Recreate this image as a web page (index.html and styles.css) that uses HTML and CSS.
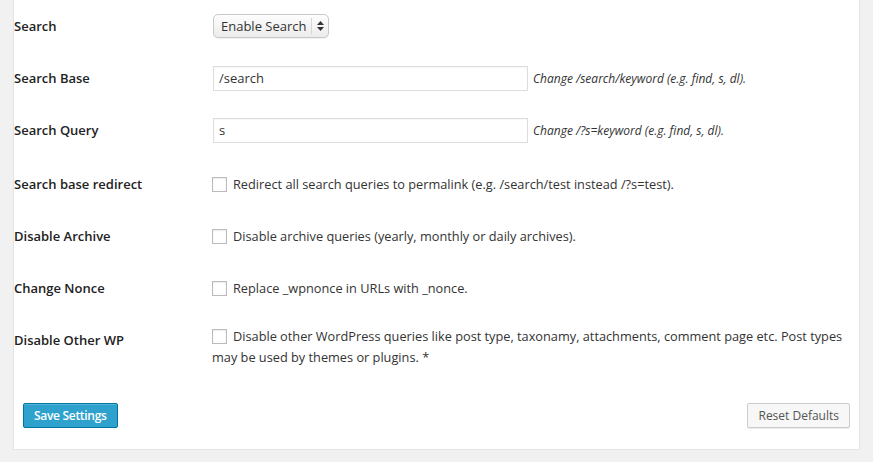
FILE: index.html
```
<!DOCTYPE html>
<html lang="en">
<head>
    <meta charset="UTF-8">
    <title>Search Settings</title>
    <link rel="stylesheet" href="styles.css">
</head>
<body>

    <div class="panel">
        <form id="search-settings">

            <div class="row">
                <label class="row-label" for="search">Search</label>
                <div class="row-field">
                    <div class="select">
                        <span>Enable Search</span>
                        <span class="select-arrows">
                            <svg width="7" height="10" viewBox="0 0 7 10"><path d="M3.5 0 L7 4 H0 Z M3.5 10 L7 6 H0 Z" fill="#333"/></svg>
                        </span>
                    </div>
                </div>
            </div>

            <div class="row">
                <label class="row-label" for="search-base">Search Base</label>
                <div class="row-field">
                    <input type="text" id="search-base" class="text-input" value="/search">
                    <span class="description">Change /search/keyword (e.g. find, s, dl).</span>
                </div>
            </div>

            <div class="row">
                <label class="row-label" for="search-query">Search Query</label>
                <div class="row-field">
                    <input type="text" id="search-query" class="text-input" value="s">
                    <span class="description">Change /?s=keyword (e.g. find, s, dl).</span>
                </div>
            </div>

            <div class="row row-check">
                <span class="row-label">Search base redirect</span>
                <label class="row-field check">
                    <span class="checkbox"></span>Redirect all search queries to permalink (e.g. /search/test instead /?s=test).
                </label>
            </div>

            <div class="row row-check">
                <span class="row-label">Disable Archive</span>
                <label class="row-field check">
                    <span class="checkbox"></span>Disable archive queries (yearly, monthly or daily archives).
                </label>
            </div>

            <div class="row row-check">
                <span class="row-label">Change Nonce</span>
                <label class="row-field check">
                    <span class="checkbox"></span>Replace _wpnonce in URLs with _nonce.
                </label>
            </div>

            <div class="row row-tall">
                <span class="row-label">Disable Other WP</span>
                <label class="row-field check-block">
                    <span class="checkbox"></span>Disable other WordPress queries like post type, taxonamy, attachments, comment page etc. Post types may be used by themes or plugins. *
                </label>
            </div>

            <div class="actions">
                <button type="submit" class="btn btn-primary">Save Settings</button>
                <button type="button" class="btn">Reset Defaults</button>
            </div>

        </form>
    </div>

</body>
</html>
```

FILE: styles.css
```
* {
    margin: 0;
    padding: 0;
    box-sizing: border-box;
}

body {
    font-family: 'Open Sans', sans-serif;
    font-size: 13px;
    color: #444;
    background-color: #f1f1f1;
}

/* White settings box */
.panel {
    width: 847px;
    margin-left: 13px;
    background-color: #fff;
    border: 1px solid #e5e5e5;
    border-top: none;
    box-shadow: 0 1px 1px rgba(0, 0, 0, 0.04);
}

.row {
    display: flex;
    align-items: center;
    height: 52px;
}

.row-check {
    padding-top: 4px;
}

.row-label {
    width: 198px;
    flex-shrink: 0;
    font-weight: 600;
    color: #222;
}

.row-field {
    display: flex;
    align-items: center;
}

/* Select box */
.select {
    display: flex;
    align-items: center;
    width: 116px;
    height: 24px;
    margin-left: 1px;
    border: 1px solid #c8c8c8;
    border-radius: 5px;
    background: linear-gradient(#fdfdfd, #ececec);
    box-shadow: 0 1px 1px rgba(0, 0, 0, 0.06);
    color: #333;
    padding-left: 7px;
}

.select span:first-child {
    flex: 1;
}

.select-arrows {
    display: flex;
    align-items: center;
    justify-content: center;
    width: 17px;
    height: 16px;
    border-left: 1px solid #d6d6d6;
}

.text-input {
    width: 315px;
    height: 25px;
    margin-left: 1px;
    border: 1px solid #ddd;
    padding: 0 5px;
    font-family: 'Open Sans', sans-serif;
    font-size: 13px;
    color: #333;
    outline: none;
    box-shadow: inset 0 1px 2px rgba(0, 0, 0, 0.04);
}

.description {
    margin-left: 5px;
    font-size: 12px;
    font-style: italic;
    color: #333;
}

/* Checkbox rows */
.checkbox {
    display: inline-block;
    width: 15px;
    height: 15px;
    border: 1px solid #bbb;
    background-color: #fff;
    box-shadow: inset 0 1px 2px rgba(0, 0, 0, 0.08);
    margin-right: 6px;
    vertical-align: -3px;
}

.check {
    color: #333;
    font-size: 12.75px;
}

.row-tall {
    height: auto;
    align-items: flex-start;
    padding-top: 14px;
}

.row-tall .row-label {
    padding-top: 5px;
}

.check-block {
    display: block;
    color: #333;
    font-size: 12.75px;
    line-height: 21px;
    width: 640px;
}

/* Buttons */
.actions {
    display: flex;
    justify-content: space-between;
    padding: 35px 9px 21px 9px;
}

.btn {
    height: 25px;
    padding: 0 10px;
    font-family: 'Open Sans', sans-serif;
    font-size: 12px;
    color: #555;
    background-color: #f7f7f7;
    border: 1px solid #ccc;
    border-radius: 2px;
    box-shadow: 0 1px 0 rgba(0, 0, 0, 0.08);
    cursor: pointer;
}

.btn-primary {
    background-color: #2ea2cc;
    border-color: #0074a2;
    color: #fff;
    font-weight: 600;
    letter-spacing: -0.3px;
    box-shadow: inset 0 1px 0 rgba(120, 200, 230, 0.5);
}
```
